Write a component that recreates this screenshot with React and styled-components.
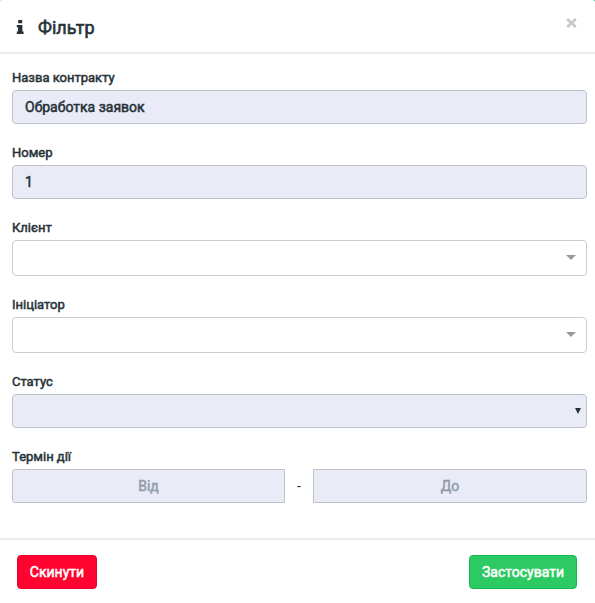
import React from "react";
import styled, { createGlobalStyle } from "styled-components";

const GlobalStyle = createGlobalStyle`
  *, *::before, *::after { box-sizing: border-box; }
  body { margin: 0; background: linear-gradient(90deg, #a8dcd8, #3b9b6a); overflow: hidden; }
  input, select, button { font-family: inherit; }
`;

const Dialog = styled.div`
  display: flex;
  flex-direction: column;
  height: 603px;
  border-radius: 2px 2px 0 0;
  background: #fff;
  color: #263238;
  font: 14px/20px Roboto, "Liberation Sans", sans-serif;
`;

const Header = styled.header`
  display: flex;
  align-items: center;
  height: 54px;
  padding: 2px 18px 0 16px;
  border-bottom: 2px solid #e9ecef;
`;

const InfoIcon = styled.svg`
  width: 8px;
  height: 14px;
  margin-right: 14px;
  fill: #263238;
`;

const Title = styled.h4`
  flex: 1;
  margin: 2px 0 0;
  font-size: 18px;
  font-weight: 400;
  -webkit-text-stroke: 0.6px;
  line-height: 26px;
`;

const CloseButton = styled.button`
  align-self: flex-start;
  display: flex;
  margin: 16px 0 0;
  padding: 0;
  border: 0;
  background: none;
`;

const CloseIcon = styled.svg`
  width: 11px;
  height: 10px;
  fill: none;
  stroke: #c8c8c8;
  stroke-width: 2.7;
`;

const Body = styled.form`
  flex: 1;
  padding: 15px 8px 0 12px;
`;

const Field = styled.div`
  margin-bottom: 20px;
`;

const Label = styled.label`
  display: block;
  height: 20px;
  margin-bottom: 2px;
  margin-top: -1px;
  font-size: 13px;
  -webkit-text-stroke: 0.5px;
`;

const TextInput = styled.input`
  display: block;
  width: 100%;
  height: 34px;
  padding: 6px 12px;
  border: 1px solid #bdc2ca;
  border-radius: ${(p) => p.$radius || "4px"};
  background: #e9ebf7;
  color: #263238;
  font-size: 14px;
  -webkit-text-stroke: 0.5px;
  text-align: ${(p) => p.$align || "left"};
  outline: 0;
  &::placeholder { color: #919ca9; opacity: 1; }
`;

const Picker = styled.div`
  display: flex;
  align-items: center;
  justify-content: flex-end;
  height: 36px;
  padding: 0 10px 1px 0;
  border: 1px solid #ccc;
  border-radius: 4px;
  &::after {
    content: "";
    border: 5px solid transparent;
    border-top-color: #999;
    border-bottom: 0;
  }
`;

const Select = styled.div`
  display: flex;
  align-items: center;
  justify-content: flex-end;
  height: 34px;
  padding-right: 5px;
  border: 1px solid #bdc2ca;
  border-radius: 4px;
  background: #e9ebf7;
`;

const SelectArrow = styled.svg`
  width: 6px;
  height: 6px;
  fill: #263238;
`;

const Range = styled.div`
  display: grid;
  grid-template-columns: 273px 28px 274px;
  align-items: center;
  text-align: center;
`;

const Footer = styled.footer`
  display: flex;
  justify-content: space-between;
  height: 65px;
  padding: 15px 18px 0 17px;
  border-top: 2px solid #e9ecef;
`;

const Button = styled.button`
  width: ${(p) => p.$width};
  height: 34px;
  padding: 0;
  border: 1px solid ${(p) => p.$border};
  border-radius: 4px;
  background: ${(p) => p.$color};
  color: #fff;
  font-size: 14px;
  -webkit-text-stroke: 0.5px;
`;

export default function App() {
  return (
    <Dialog>
      <GlobalStyle />
      <Header>
        <InfoIcon viewBox="0 0 8 14">
          <path d="M2.2 0h4v3.2h-4zM.8 5h5.6v6.5h1.2V14H.8v-2.5H2V7.2H.8z" />
        </InfoIcon>
        <Title>Фільтр</Title>
        <CloseButton type="button" aria-label="Закрити">
          <CloseIcon viewBox="0 0 11 10"><path d="M1.2 1l8.6 8M9.8 1L1.2 9" /></CloseIcon>
        </CloseButton>
      </Header>
      <Body>
        <Field><Label>Назва контракту</Label><TextInput defaultValue="Обработка заявок" /></Field>
        <Field><Label>Номер</Label><TextInput defaultValue="1" /></Field>
        <Field><Label>Клієнт</Label><Picker /></Field>
        <Field><Label>Ініціатор</Label><Picker /></Field>
        <Field>
          <Label>Статус</Label>
          <Select><SelectArrow viewBox="0 0 6 6"><path d="M0 0h6L3 6z" /></SelectArrow></Select>
        </Field>
        <Field>
          <Label>Термін дії</Label>
          <Range>
            <TextInput placeholder="Від" $align="center" $radius="3px 0 0 3px" />
            <span>-</span>
            <TextInput placeholder="До" $align="center" $radius="0 3px 3px 0" />
          </Range>
        </Field>
      </Body>
      <Footer>
        <Button type="button" $width="80px" $color="#ff0430" $border="#e6002b">Скинути</Button>
        <Button type="button" $width="108px" $color="#2dc962" $border="#10bd53">Застосувати</Button>
      </Footer>
    </Dialog>
  );
}
